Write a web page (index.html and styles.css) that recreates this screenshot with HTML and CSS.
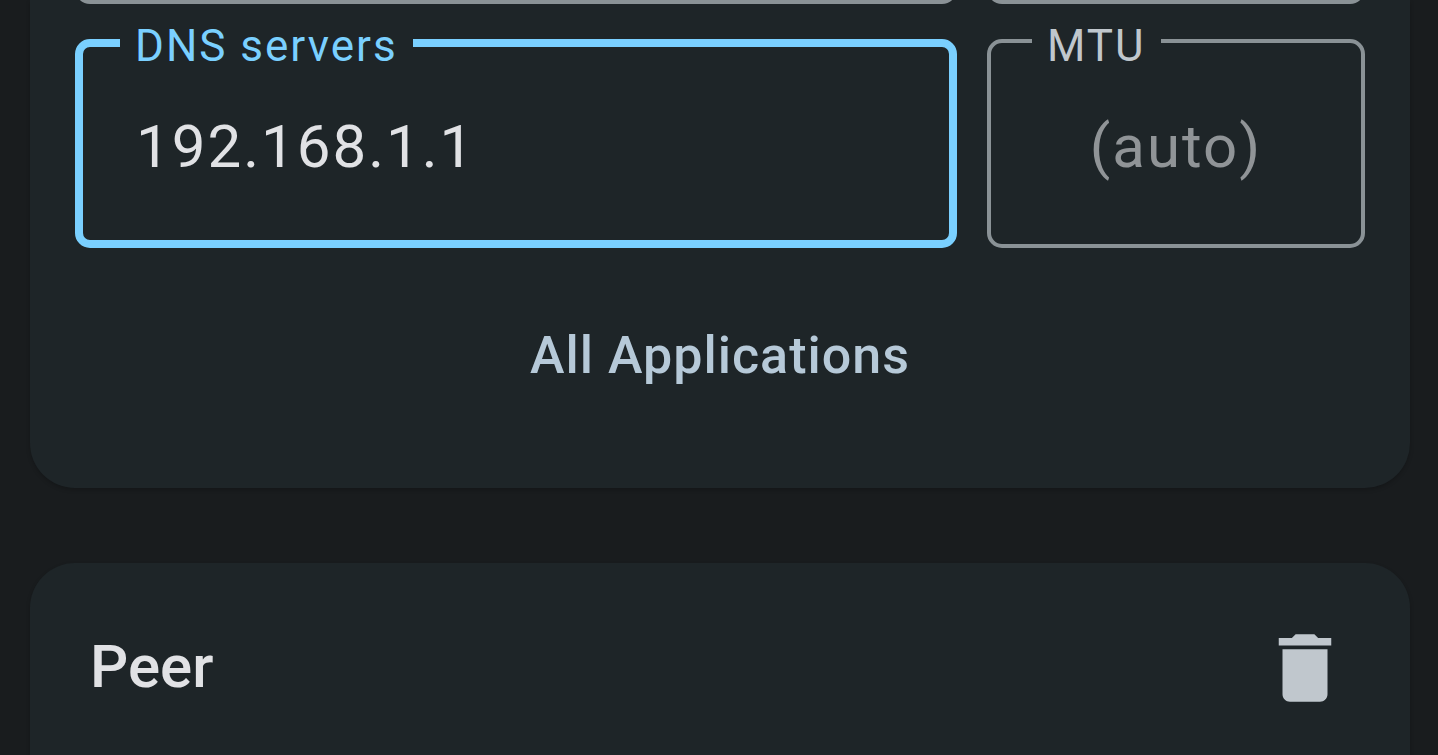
FILE: index.html
```html
<!DOCTYPE html>
<html lang="en">
<head>
  <meta charset="UTF-8" />
  <meta name="viewport" content="width=device-width, initial-scale=1.0" />
  <title>WireGuard</title>
  <link rel="stylesheet" href="styles.css">
</head>
<body>
  <section class="card interface">
    <div class="row row-end">
      <div class="box-end"></div>
      <div class="box-end"></div>
    </div>

    <div class="row">
      <fieldset class="field active">
        <legend><label for="dnsServers">DNS servers</label></legend>
        <input type="text" id="dnsServers" value="192.168.1.1" />
      </fieldset>
      <fieldset class="field center">
        <legend><label for="mtu">MTU</label></legend>
        <input type="text" id="mtu" placeholder="(auto)" />
      </fieldset>
    </div>

    <button type="button" class="text-button">All Applications</button>
  </section>

  <section class="card peer">
    <h2>Peer</h2>
    <button type="button" class="icon-button" aria-label="Delete">
      <svg viewBox="0 0 24 24" aria-hidden="true">
        <path d="M6 19c0 1.1.9 2 2 2h8c1.1 0 2-.9 2-2V7H6v12zM19 4h-3.5l-1-1h-5l-1 1H5v2h14V4z" />
      </svg>
    </button>
  </section>
</body>
</html>
```

FILE: styles.css
```css
* {
  box-sizing: border-box;
}
body {
  display: flex;
  flex-direction: column;
  gap: 75px;
  min-height: 100vh;
  margin: 0;
  padding: 0 28px 0 30px;
  overflow: hidden;
  background-color: #191c1e;
  color: #e1e2e5;
  font-family: Roboto, sans-serif;
}
.card {
  background-color: #1e2528;
  box-shadow: 0 2px 4px rgba(0,0,0,0.2);
}
.interface {
  padding: 0 45px 43px;
  border-radius: 0 0 45px 45px;
}
.row {
  display: grid;
  grid-template-columns: 7fr 3fr;
  gap: 30px;
}
/* bottom edge of the boxes scrolled off the top */
.row-end {
  margin-top: -16px;
  margin-bottom: 13px;
}
.box-end {
  height: 20px;
  border: 4px solid #8a9296;
  border-top: none;
  border-radius: 0 0 15px 15px;
}
.field {
  min-width: 0;
  margin: 0;
  padding: 4px 41px 20px;
  border: 4px solid #8a9296;
  border-radius: 15px;
}
.field legend {
  padding: 10px 15px 0;
  color: #c0c7cd;
  font-size: 44px;
  line-height: 38px;
  letter-spacing: 2px;
}
.field input {
  display: block;
  width: 100%;
  height: 155px;
  padding: 0 16px;
  border: none;
  outline: none;
  background: none;
  color: #e1e2e5;
  font-family: inherit;
  font-size: 60px;
  letter-spacing: 2px;
}
.field input::placeholder {
  color: #909497;
  opacity: 1;
}
.field.active {
  padding: 0 37px 16px;
  border: 8px solid #7ad0ff;
}
.field.active legend {
  padding-bottom: 4px;
  color: #7ad0ff;
}
.field.center input {
  text-align: center;
}
.text-button {
  display: block;
  width: 100%;
  height: 180px;
  margin-top: 17px;
  padding: 0;
  border: none;
  background: none;
  color: #b6c9d8;
  font-family: inherit;
  font-size: 52px;
  font-weight: 500;
  letter-spacing: 1px;
  cursor: pointer;
}
.peer {
  display: flex;
  flex: 1;
  align-items: flex-start;
  justify-content: space-between;
  padding: 60px 60px 0;
  border-radius: 45px 45px 0 0;
}
.peer h2 {
  margin: 0;
  font-size: 60px;
  font-weight: 500;
  line-height: 88px;
}
.icon-button {
  width: 90px;
  height: 90px;
  padding: 0;
  border: none;
  background: none;
  cursor: pointer;
}
.icon-button svg {
  display: block;
  fill: #c0c7cd;
}
```
